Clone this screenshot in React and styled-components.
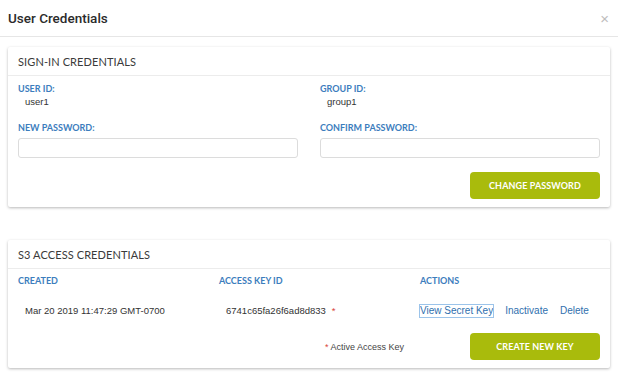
import React from "react";
import styled, { createGlobalStyle } from "styled-components";

const Global = createGlobalStyle`
  body {
    margin: 0;
    background: #fff;
    font-family: "Liberation Sans", Arial, sans-serif;
    color: #333;
  }
`;

const Modal = styled.div`
  width: 618px;
  height: 384px;
  background: #fff;
`;

const ModalHeader = styled.div`
  height: 36px;
  display: flex;
  align-items: center;
  justify-content: space-between;
  padding: 0 9px 0 8px;
  border-bottom: 1px solid #e6e6e6;
`;

const Title = styled.h2`
  margin: 0;
  font-family: Roboto, "Liberation Sans", sans-serif;
  font-size: 13.5px;
  font-weight: 500;
  color: #2b2b2b;
`;

const Close = styled.span`
  font-size: 15px;
  color: #bdbdbd;
  line-height: 1;
`;

const Body = styled.div`
  padding: 10px 8px;
  display: flex;
  flex-direction: column;
  gap: 33px;
`;

const Panel = styled.section`
  background: #fff;
  box-shadow: 0 1px 3px rgba(0, 0, 0, 0.28);
  border-radius: 2px;
`;

const PanelHeader = styled.div`
  height: 28px;
  display: flex;
  align-items: center;
  padding-left: 10px;
  border-bottom: 1px solid #ececec;
  font-family: Lato, "Open Sans", sans-serif;
  font-size: 11px;
  color: #3a3a3a;
  letter-spacing: 0.1px;
`;

const FormGrid = styled.div`
  display: grid;
  grid-template-columns: 1fr 1fr;
  column-gap: 22px;
  padding: 7px 10px 0;
`;

const Field = styled.div`
  display: flex;
  flex-direction: column;
  margin-top: ${(p) => (p.$top ? "14px" : "0")};
`;

const Label = styled.div`
  font-family: Lato, "Open Sans", sans-serif;
  font-weight: 700;
  font-size: 9px;
  line-height: 12px;
  color: #3c7dbd;
  text-transform: uppercase;
`;

const Value = styled.div`
  font-size: 9.5px;
  line-height: 12px;
  margin-top: ${(p) => p.$gap || "0"};
  padding-left: 7px;
  color: #333;
`;

const Input = styled.input`
  margin-top: 4px;
  height: 20px;
  box-sizing: border-box;
  border: 1px solid #dcdcdc;
  border-radius: 3px;
  background: #fff;
  outline: none;
`;

const Footer = styled.div`
  display: flex;
  justify-content: flex-end;
  align-items: center;
  gap: 66px;
  padding: ${(p) => p.$pad || "14px 10px 8px"};
`;

const Button = styled.button`
  width: 130px;
  height: 27px;
  border: none;
  border-radius: 4px;
  background: #a9bb0c;
  color: #fff;
  font-family: Lato, "Open Sans", sans-serif;
  font-weight: 700;
  font-size: 9px;
  letter-spacing: 0.1px;
  text-transform: uppercase;
`;

const KeyGrid = styled.div`
  display: grid;
  grid-template-columns: 201px 201px 1fr;
  padding: 6px 10px 0;
  row-gap: 18px;
`;

const Star = styled.span`
  color: #d9443c;
  margin-left: ${(p) => p.$left || "6px"};
`;

const Actions = styled.div`
  display: flex;
  gap: 12px;
  font-size: 10px;
  line-height: 12px;
`;

const Link = styled.a`
  color: #2f6fae;
  text-decoration: none;
  outline: ${(p) => (p.$focused ? "1px solid #9cc4ea" : "none")};
`;

const Note = styled.div`
  font-size: 9px;
  color: #444;
`;

export default function App() {
  return (
    <Modal>
      <Global />
      <ModalHeader>
        <Title>User Credentials</Title>
        <Close>×</Close>
      </ModalHeader>
      <Body>
        <Panel>
          <PanelHeader>SIGN-IN CREDENTIALS</PanelHeader>
          <FormGrid>
            <Field>
              <Label>User ID:</Label>
              <Value $gap="1px">user1</Value>
            </Field>
            <Field>
              <Label>Group ID:</Label>
              <Value $gap="1px">group1</Value>
            </Field>
            <Field $top>
              <Label>New Password:</Label>
              <Input type="password" />
            </Field>
            <Field $top>
              <Label>Confirm Password:</Label>
              <Input type="password" />
            </Field>
          </FormGrid>
          <Footer>
            <Button>Change Password</Button>
          </Footer>
        </Panel>

        <Panel>
          <PanelHeader>S3 ACCESS CREDENTIALS</PanelHeader>
          <KeyGrid>
            <Label>Created</Label>
            <Label>Access Key ID</Label>
            <Label>Actions</Label>
            <Value>Mar 20 2019 11:47:29 GMT-0700</Value>
            <Value>
              6741c65fa26f6ad8d833<Star>*</Star>
            </Value>
            <Actions>
              <Link $focused>View Secret Key</Link>
              <Link>Inactivate</Link>
              <Link>Delete</Link>
            </Actions>
          </KeyGrid>
          <Footer $pad="16px 10px 8px">
            <Note>
              <Star $left="0">*</Star> Active Access Key
            </Note>
            <Button>Create New Key</Button>
          </Footer>
        </Panel>
      </Body>
    </Modal>
  );
}
